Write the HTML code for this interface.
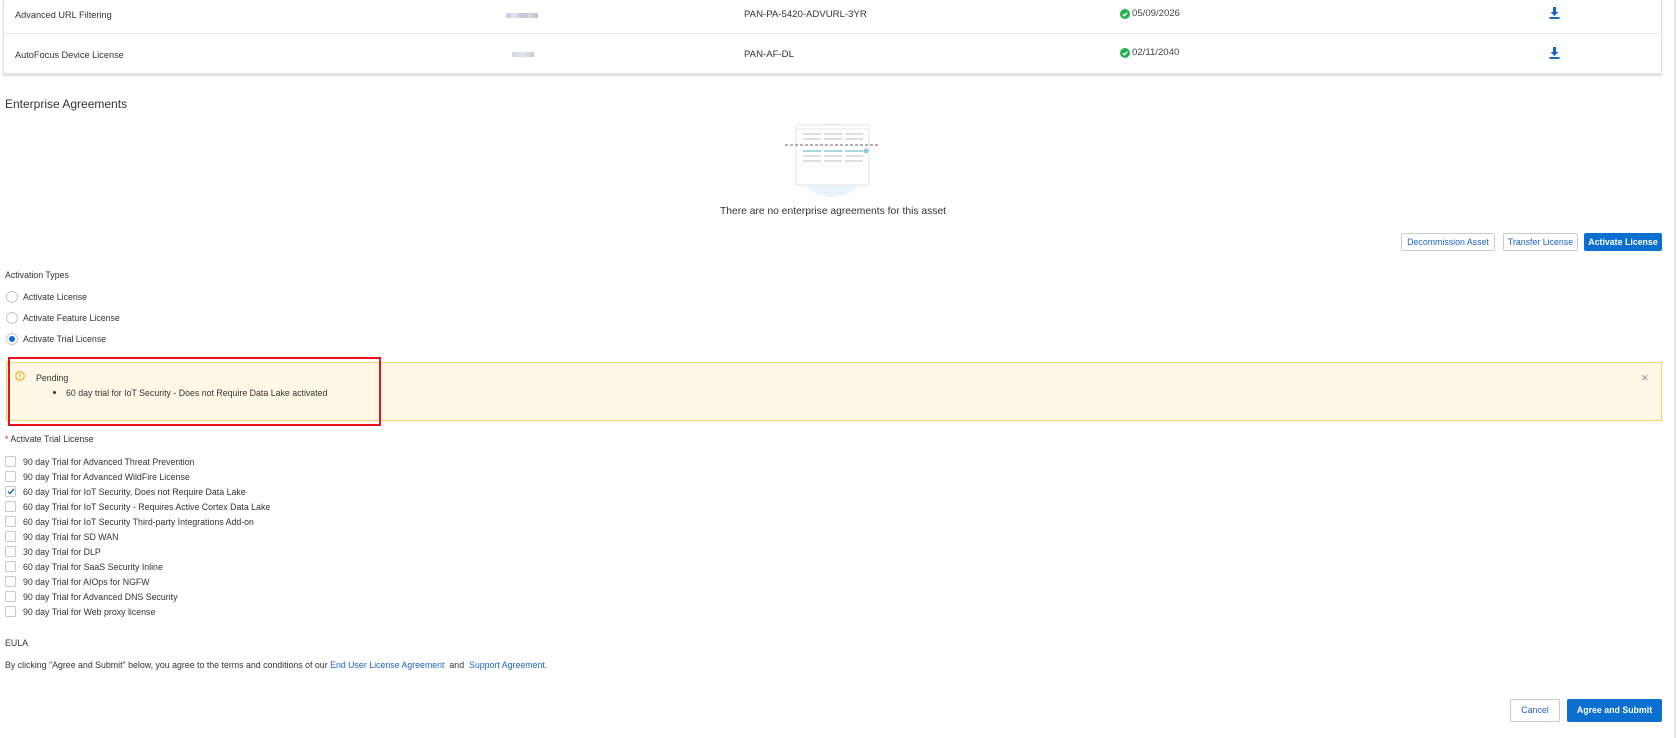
<!DOCTYPE html>
<html><head><meta charset="utf-8"><style>
*{margin:0;padding:0;box-sizing:border-box}
body{width:1677px;height:738px;background:#fff;font-family:"Liberation Sans",sans-serif;color:#333;position:relative;overflow:hidden;font-size:8.8px}
.a{position:absolute;white-space:nowrap}
.t{line-height:12px}
.cb{position:absolute;left:5px;width:11px;height:11px;border:1px solid #c8c8c8;border-radius:2px;background:#fff}
.rd{position:absolute;left:6px;width:12px;height:12px;border:1px solid #c8c8c8;border-radius:50%}
.btn{position:absolute;border:1px solid #ccc;border-radius:2px;color:#1b64c8;font-size:8.8px;text-align:center;background:#fff}
.bp{background:#0a6fce;border-color:#0a6fce;color:#fff;font-weight:bold}
</style></head><body>
<div class="a" style="left:3px;top:-2px;width:1659px;height:76px;border:1px solid #e3e3e3;border-top:none;box-shadow:0 2px 2px #ddd"></div>
<div class="a" style="left:4px;top:33px;width:1657px;height:1px;background:#e8e8e8"></div>
<div class="a" style="left:1674px;top:0;width:2px;height:738px;background:#e6e6e6"></div>
<div class="a t" style="left:15px;top:9px;font-size:9.2px">Advanced URL Filtering</div>
<div class="a t" style="left:15px;top:49px;font-size:9.2px">AutoFocus Device License</div>
<div class="a" style="left:506px;top:13px;width:32px;height:5px;background:linear-gradient(90deg,#b8bccc,#dde,#b0b5c4,#ccd,#a9b0c0);opacity:.8"></div>
<div class="a" style="left:512px;top:52px;width:22px;height:5px;background:linear-gradient(90deg,#c9cdd8,#dde,#b5bacb);opacity:.8"></div>
<div class="a t" style="left:744px;top:9px;font-size:9.6px">PAN-PA-5420-ADVURL-3YR</div>
<div class="a t" style="left:744px;top:49px;font-size:9.6px">PAN-AF-DL</div>
<svg class="a" style="left:1120px;top:9px" width="10" height="10"><circle cx="5" cy="5" r="5" fill="#22b24c"/><path d="M2.8 5.2l1.5 1.5 3-3" stroke="#fff" stroke-width="1.4" fill="none"/></svg>
<svg class="a" style="left:1120px;top:48px" width="10" height="10"><circle cx="5" cy="5" r="5" fill="#22b24c"/><path d="M2.8 5.2l1.5 1.5 3-3" stroke="#fff" stroke-width="1.4" fill="none"/></svg>
<div class="a t" style="left:1132px;top:8px;font-size:9.6px;color:#444">05/09/2026</div>
<div class="a t" style="left:1132px;top:47px;font-size:9.6px;color:#444">02/11/2040</div>
<svg class="a" style="left:1549px;top:7px" width="11" height="12"><path d="M4 0h3v5h2.5L5.5 9 1.5 5H4z" fill="#1b64c8"/><rect x="0.5" y="10" width="10" height="2" fill="#1b64c8"/></svg>
<svg class="a" style="left:1549px;top:47px" width="11" height="12"><path d="M4 0h3v5h2.5L5.5 9 1.5 5H4z" fill="#1b64c8"/><rect x="0.5" y="10" width="10" height="2" fill="#1b64c8"/></svg>

<div class="a" style="left:5px;top:97px;font-size:12px;color:#333">Enterprise Agreements</div>
<svg class="a" style="left:785px;top:120px" width="96" height="82">
<circle cx="47" cy="40" r="37" fill="#e9f3fc"/>
<rect x="11" y="5" width="73" height="60" rx="2" fill="#fff" stroke="#e3e3e3"/>
<line x1="11" y1="9" x2="84" y2="9" stroke="#e6e6e6"/>
<g stroke="#dedede" stroke-width="2"><path d="M18 14h18M39 14h18M60 14h18M18 19h18M39 19h18M60 19h18M18 36h18M39 36h18M60 36h18M18 41h18M39 41h18M60 41h18"/></g>
<path d="M18 31h18M39 31h18M60 31h18" stroke="#a8d8e0" stroke-width="2"/>
<circle cx="81" cy="31" r="2.5" fill="#8cc9de"/>
<line x1="0" y1="25" x2="94" y2="25" stroke="#666" stroke-dasharray="3 2"/>
</svg>
<div class="a" style="left:0;width:1666px;text-align:center;top:206px;font-size:10.3px;color:#333">There are no enterprise agreements for this asset</div>

<div class="btn" style="left:1401px;top:233px;width:94px;height:18px;line-height:16px">Decommission Asset</div>
<div class="btn" style="left:1503px;top:233px;width:75px;height:18px;line-height:16px">Transfer License</div>
<div class="btn bp" style="left:1584px;top:233px;width:78px;height:18px;line-height:16px">Activate License</div>

<div class="a t" style="left:5px;top:269px">Activation Types</div>
<div class="rd" style="top:291px"></div><div class="a t" style="left:23px;top:291px">Activate License</div>
<div class="rd" style="top:312px"></div><div class="a t" style="left:23px;top:312px">Activate Feature License</div>
<div class="rd" style="top:333px"></div><div class="a" style="left:9px;top:336px;width:6px;height:6px;border-radius:50%;background:#0a6fce"></div><div class="a t" style="left:23px;top:333px">Activate Trial License</div>

<div class="a" style="left:6px;top:362px;width:1656px;height:59px;background:#fff8e6;border:1px solid #f5d56b"></div>
<svg class="a" style="left:15px;top:371px" width="10" height="10"><circle cx="5" cy="5" r="4.3" fill="none" stroke="#f0a30a" stroke-width="1.1"/><path d="M5 2.5v3.2M5 6.8v1" stroke="#f0a30a" stroke-width="1.1"/></svg>
<div class="a t" style="left:36px;top:372px">Pending</div>
<div class="a" style="left:53px;top:391px;width:3px;height:3px;border-radius:50%;background:#333"></div>
<div class="a t" style="left:66px;top:387px">60 day trial for IoT Security - Does not Require Data Lake activated</div>
<div class="a" style="left:1641px;top:370px;font-size:13px;color:#999">×</div>
<div class="a" style="left:8px;top:357px;width:373px;height:69px;border:2.5px solid #e8141b"></div>

<div class="a t" style="left:5px;top:433px"><span style="color:#e8141b">*</span> Activate Trial License</div>

<div class="cb" style="top:456px"></div><div class="a t" style="left:23px;top:456px">90 day Trial for Advanced Threat Prevention</div>
<div class="cb" style="top:471px"></div><div class="a t" style="left:23px;top:471px">90 day Trial for Advanced WildFire License</div>
<div class="cb" style="top:486px"></div><svg class="a" style="left:7px;top:488px" width="8" height="7"><path d="M1 3.5l2 2 4-4.5" stroke="#1b64c8" stroke-width="1.4" fill="none"/></svg><div class="a t" style="left:23px;top:486px">60 day Trial for IoT Security, Does not Require Data Lake</div>
<div class="cb" style="top:501px"></div><div class="a t" style="left:23px;top:501px">60 day Trial for IoT Security - Requires Active Cortex Data Lake</div>
<div class="cb" style="top:516px"></div><div class="a t" style="left:23px;top:516px">60 day Trial for IoT Security Third-party Integrations Add-on</div>
<div class="cb" style="top:531px"></div><div class="a t" style="left:23px;top:531px">90 day Trial for SD WAN</div>
<div class="cb" style="top:546px"></div><div class="a t" style="left:23px;top:546px">30 day Trial for DLP</div>
<div class="cb" style="top:561px"></div><div class="a t" style="left:23px;top:561px">60 day Trial for SaaS Security Inline</div>
<div class="cb" style="top:576px"></div><div class="a t" style="left:23px;top:576px">90 day Trial for AIOps for NGFW</div>
<div class="cb" style="top:591px"></div><div class="a t" style="left:23px;top:591px">90 day Trial for Advanced DNS Security</div>
<div class="cb" style="top:606px"></div><div class="a t" style="left:23px;top:606px">90 day Trial for Web proxy license</div>

<div class="a t" style="left:5px;top:637px">EULA</div>
<div class="a t" style="left:5px;top:659px">By clicking "Agree and Submit" below, you agree to the terms and conditions of our <span style="color:#1b64c8">End User License Agreement</span>&nbsp; and &nbsp;<span style="color:#1b64c8">Support Agreement</span>.</div>

<div class="btn" style="left:1510px;top:699px;width:50px;height:23px;line-height:21px">Cancel</div>
<div class="btn bp" style="left:1567px;top:699px;width:95px;height:23px;line-height:21px">Agree and Submit</div>
</body></html>
